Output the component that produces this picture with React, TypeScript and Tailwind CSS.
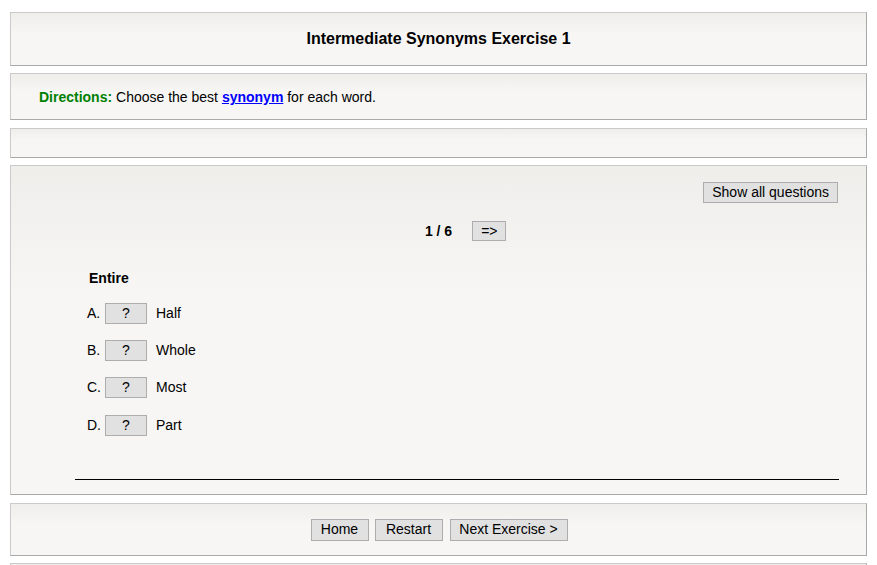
const box =
  "mx-[10px] border border-t-[#cacaca] border-l-[#cacaca] border-r-[#a9a9a9] border-b-[#a9a9a9] bg-gradient-to-b from-[#f0eeeb] to-[#f7f6f4] to-[40%]";
const btn =
  "bg-[#e1e1e1] border border-[#adadad] text-[14px] leading-[19px] text-black px-[8px]";

const options = [
  { letter: "A.", word: "Half" },
  { letter: "B.", word: "Whole" },
  { letter: "C.", word: "Most" },
  { letter: "D.", word: "Part", extra: true },
];

export default function App() {
  return (
    <div className="min-h-[565px] bg-white pt-[12px] font-['Liberation_Sans',Arial,sans-serif] text-[14px] text-black">
      <div className={`${box} h-[54px] flex items-center justify-center`}>
        <h1 className="text-[16px] font-bold">Intermediate Synonyms Exercise 1</h1>
      </div>

      <div className={`${box} mt-[7px] h-[47px] flex items-center pl-[28px] pt-[2px]`}>
        <p>
          <span className="font-bold text-[#008000]">Directions:</span> Choose the best{" "}
          <a href="#" className="font-bold text-[#0000ff] underline">
            synonym
          </a>{" "}
          for each word.
        </p>
      </div>

      <div className={`${box} mt-[8px] h-[30px]`} />

      <div className={`${box} mt-[7px] h-[330px] flex flex-col pt-[16px]`}>
        <div className="flex justify-end pr-[28px]">
          <button className={`${btn} h-[21px] px-[8px]`}>Show all questions</button>
        </div>
        <div className="grid grid-cols-[1fr_auto_1fr] items-center mt-[18px]">
          <span />
          <span className="font-bold">1 / 6</span>
          <div>
            <button className={`${btn} h-[20px] ml-[20px] w-[34px] px-0`}>=&gt;</button>
          </div>
        </div>
        <div className="pl-[78px] mt-[26px] font-bold">Entire</div>
        <div className="flex flex-col gap-[16px] mt-[14px] pl-[76px]">
          {options.map((o) => (
            <div key={o.letter} className={`flex items-center h-[21px] ${o.extra ? "mt-[1px]" : ""}`}>
              <span className="w-[18px]">{o.letter}</span>
              <button className={`${btn} h-[21px] w-[42px] px-0`}>?</button>
              <span className="ml-[9px]">{o.word}</span>
            </div>
          ))}
        </div>
        <div className="mt-auto mb-[14px] ml-[64px] mr-[27px] border-t border-black" />
      </div>

      <div className={`${box} mt-[8px] h-[53px] flex items-center justify-center gap-[6px] pl-[1px]`}>
        <button className={`${btn} h-[22px] w-[58px] px-0`}>Home</button>
        <button className={`${btn} h-[22px] w-[68px] px-0`}>Restart</button>
        <button className={`${btn} h-[22px] w-[118px] px-0 ml-[1px]`}>Next Exercise &gt;</button>
      </div>

      <div className={`${box} mt-[7px] h-[30px]`} />
    </div>
  );
}
